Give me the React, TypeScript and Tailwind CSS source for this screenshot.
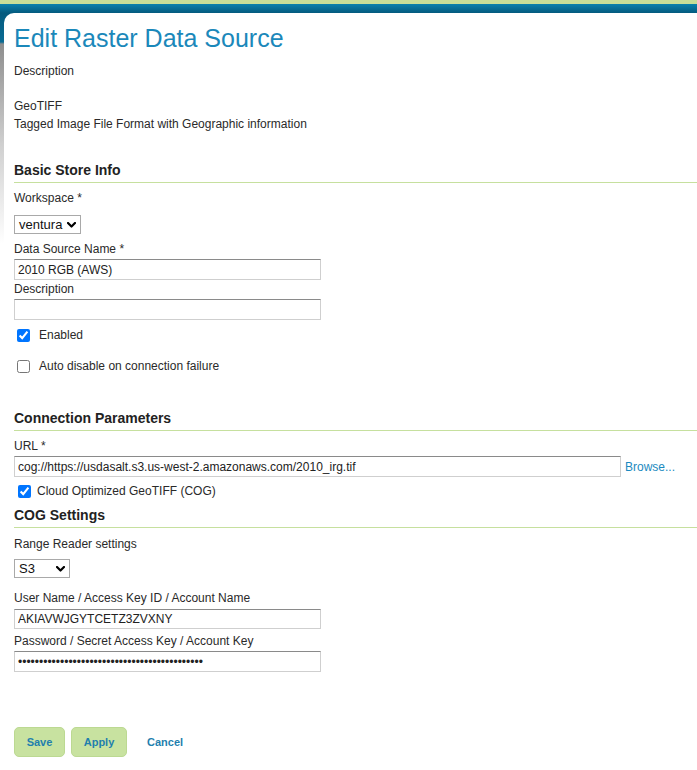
function Heading({ children, mt }: { children: string; mt: string }) {
  return (
    <h3 className={`${mt} border-b border-[#c6e09e] pb-[3px] text-[14px] font-bold leading-[18px] text-[#222]`}>
      {children}
    </h3>
  )
}

function Label({ children, mt = 'mt-0' }: { children: string; mt?: string }) {
  return <div className={`${mt} leading-[18px]`}>{children}</div>
}

function TextBox({
  value,
  width,
  h = 'h-[21px]',
  mt = 'mt-px',
  type = 'text',
}: {
  value: string
  width: string
  h?: string
  mt?: string
  type?: string
}) {
  return (
    <input
      type={type}
      readOnly
      defaultValue={value}
      className={`${mt} ${width} ${h} block border border-[#cfcfcf] border-t-[#8a8a8a] bg-white px-[3px] text-[12px] text-[#222] outline-none`}
    />
  )
}

function Dropdown({ value, width, mt }: { value: string; width: string; mt: string }) {
  return (
    <div
      className={`${mt} flex h-[19px] ${width} items-center justify-between border border-[#a9a9a9] bg-white pl-[4px] pr-[4px] text-[13px] leading-none text-[#111]`}
    >
      <span>{value}</span>
      {/* chevron */}
      <svg width="9" height="6" viewBox="0 0 9 6" className="mt-px">
        <polyline points="1,1 4.5,4.5 8,1" fill="none" stroke="#000" strokeWidth="2.2" strokeLinecap="round" strokeLinejoin="round" />
      </svg>
    </div>
  )
}

function Check({
  label,
  checked,
  row,
  gap,
  ml,
}: {
  label: string
  checked: boolean
  row: string
  gap: string
  ml: string
}) {
  return (
    <label className={`${row} flex h-[18px] items-center ${gap} leading-[18px]`}>
      <input type="checkbox" defaultChecked={checked} className={`${ml} m-0 h-[13px] w-[13px] accent-[#0075ff]`} />
      <span>{label}</span>
    </label>
  )
}

export default function App() {
  return (
    <div className="min-h-[770px] bg-white font-['Liberation_Sans',Arial,sans-serif] text-[12px] text-[#2a2a2a]">
      <div className="h-[4px] bg-[#c8dd98]" />
      <div className="bg-[linear-gradient(to_bottom,#0a80ad_0px,#045a7e_9px,#0a6b94_38px,#8e8e8e_40px,#cfcfcf_140px,#ffffff_240px)] pl-[4px] pt-[9px]">
        <div className="rounded-tl-[10px] bg-white pl-[10px] pt-[10px]">
          <h1 className="text-[25px] font-normal leading-[30px] text-[#1b88ba]">Edit Raster Data Source</h1>
          <div className="mt-[9px] leading-[18px]">Description</div>
          <div className="mt-[17px] leading-[18px]">GeoTIFF</div>
          <div className="leading-[18px]">Tagged Image File Format with Geographic information</div>

          <Heading mt="mt-[28px]">Basic Store Info</Heading>
          <Label mt="mt-[6px]">Workspace *</Label>
          <Dropdown value="ventura" width="w-[67px]" mt="mt-2" />
          <Label mt="mt-[6px]">Data Source Name *</Label>
          <TextBox value="2010 RGB (AWS)" width="w-[307px]" />
          <Label>Description</Label>
          <TextBox value="" width="w-[307px]" />
          <Check label="Enabled" checked row="mt-[6px]" gap="gap-[9px]" ml="ml-[3px]" />
          <Check label="Auto disable on connection failure" checked={false} row="mt-[13px]" gap="gap-[9px]" ml="ml-[3px]" />

          <Heading mt="mt-[34px]">Connection Parameters</Heading>
          <Label mt="mt-[6px]">URL *</Label>
          <div className="flex items-center gap-[4px]">
            <TextBox value="cog://https://usdasalt.s3.us-west-2.amazonaws.com/2010_irg.tif" width="w-[607px]" />
            <a className="mt-px text-[#1b8ac0]">Browse...</a>
          </div>
          <Check label="Cloud Optimized GeoTIFF (COG)" checked row="mt-[5px]" gap="gap-[6px]" ml="ml-[4px]" />

          <Heading mt="mt-[6px]">COG Settings</Heading>
          <Label mt="mt-[7px]">Range Reader settings</Label>
          <Dropdown value="S3" width="w-[56px]" mt="mt-[6px]" />
          <Label mt="mt-[11px]">User Name / Access Key ID / Account Name</Label>
          <TextBox value="AKIAVWJGYTCETZ3ZVXNY" width="w-[307px]" h="h-[20px]" mt="mt-[2px]" />
          <Label mt="mt-[3px]">Password / Secret Access Key / Account Key</Label>
          <TextBox type="password" value="abcdefghijklmnopqrstuvwxyzabcdefghijklmnopqr" width="w-[307px]" />

          <div className="mt-[55px] flex items-center pb-[13px]">
            <button className="h-[30px] w-[51px] rounded-[5px] border border-[#bcd992] bg-[#c8e2a0] text-[11px] font-bold text-[#1f7fae]">
              Save
            </button>
            <button className="ml-[6px] h-[30px] w-[56px] rounded-[5px] border border-[#bcd992] bg-[#c8e2a0] text-[11px] font-bold text-[#1f7fae]">
              Apply
            </button>
            <a className="ml-[20px] text-[11px] font-bold text-[#1f7fae]">Cancel</a>
          </div>
        </div>
      </div>
    </div>
  )
}
